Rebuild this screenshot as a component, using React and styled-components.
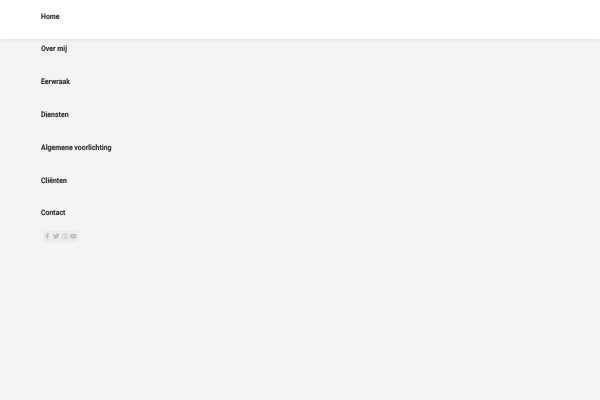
import React from 'react';
import styled, { createGlobalStyle } from 'styled-components';
import { FaFacebookF, FaTwitter, FaInstagram, FaYoutube } from 'react-icons/fa';

const GlobalStyle = createGlobalStyle`
  html, body {
    margin: 0;
    padding: 0;
    background: #f4f4f4;
    font-family: Roboto, "Liberation Sans", sans-serif;
  }
`;

const Page = styled.div`
  position: relative;
  width: 600px;
  height: 400px;
  overflow: hidden;
`;

const Header = styled.header`
  height: 39px;
  background: #fff;
  box-shadow: 0 0 5px rgba(0, 0, 0, 0.1);
`;

const Menu = styled.nav`
  position: absolute;
  top: 0;
  left: 41px;
  padding-top: 0.6px;
  display: flex;
  flex-direction: column;
  align-items: flex-start;
`;

const MenuItem = styled.a`
  height: 32.8px;
  line-height: 32px;
  font-size: 7.6px;
  font-weight: 700;
  color: #333;
  text-rendering: geometricPrecision;
  -webkit-text-stroke: 0.12px #333;
  transform: scaleX(0.915);
  transform-origin: left center;
  filter: blur(0.2px);
  white-space: nowrap;
`;

const Socials = styled.div`
  display: flex;
  margin: 0.4px 0 0 2px;
  background: #ececec;
  filter: blur(0.6px);
`;

const Social = styled.span`
  width: 8.75px;
  height: 11px;
  display: flex;
  align-items: center;
  justify-content: center;
  color: #bcbcbc;
  font-size: 6.5px;
`;

const items = ['Home', 'Over mij', 'Eerwraak', 'Diensten', 'Algemene voorlichting', 'Cliënten', 'Contact'];

const App = () => {
  return (
    <Page>
      <GlobalStyle />
      <Header />
      <Menu>
        {items.map((item) => {
          return <MenuItem key={item}>{item}</MenuItem>;
        })}
        <Socials>
          <Social><FaFacebookF /></Social>
          <Social><FaTwitter /></Social>
          <Social><FaInstagram /></Social>
          <Social><FaYoutube /></Social>
        </Socials>
      </Menu>
    </Page>
  );
};

export default App;
